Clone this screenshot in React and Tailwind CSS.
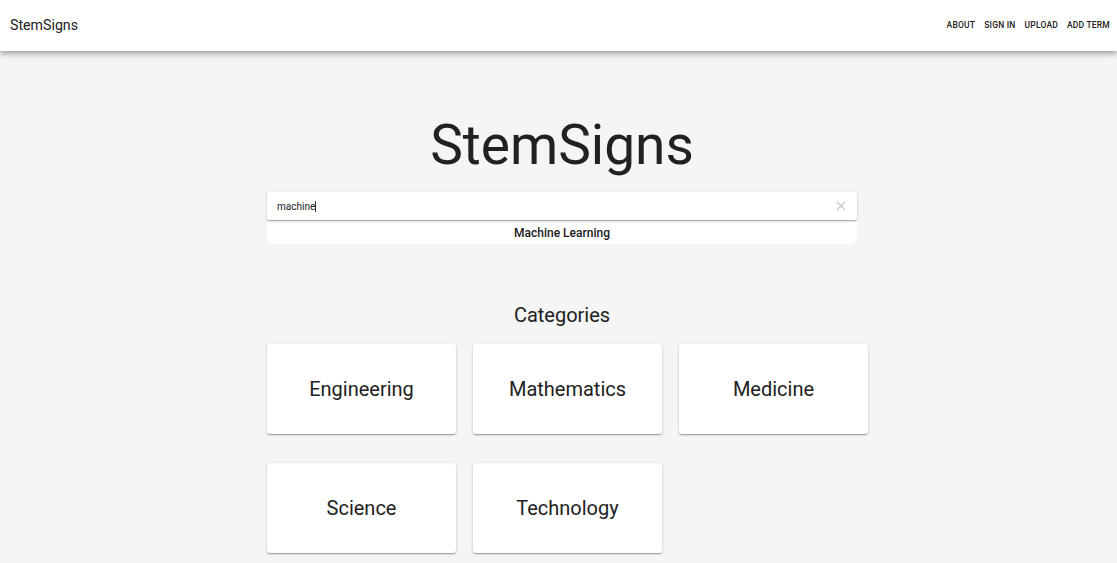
import React from "react";

const cats = ["Engineering", "Mathematics", "Medicine", "Science", "Technology"];

export default function App() {
  return (
    <div className="min-h-[563px] bg-[#f5f5f5] font-['Roboto',sans-serif] text-[#212121]">
      <header className="h-[51px] bg-white flex items-center justify-between pl-[10px] pr-[7px] shadow-[0_2px_4px_-1px_rgba(0,0,0,0.2),0_4px_5px_0_rgba(0,0,0,0.14),0_1px_10px_0_rgba(0,0,0,0.12)] relative z-10">
        <div className="text-[14.2px] text-[#212121]">StemSigns</div>
        <nav className="flex gap-[9px] text-[8.5px] font-medium tracking-[0.2px] text-[#212121]">
          <span>ABOUT</span>
          <span>SIGN IN</span>
          <span>UPLOAD</span>
          <span>ADD TERM</span>
        </nav>
      </header>
      <main className="flex flex-col items-center pl-[7px]">
        <h1 className="mt-[56px] text-[55px] leading-[76px] font-normal text-[#212121]">StemSigns</h1>
        <div className="mt-[9px] w-[590px]">
          <div className="h-[28px] bg-white rounded-[2px] flex items-center justify-between px-[10px] shadow-[0_1px_3px_rgba(0,0,0,0.2),0_1px_1px_rgba(0,0,0,0.14),0_2px_1px_-1px_rgba(0,0,0,0.12)] relative z-[1]">
            <span className="text-[10px] text-[#212121]">machine<span className="inline-block w-px h-[11px] bg-[#333] align-middle"></span></span>
            <svg width="10" height="10" viewBox="0 0 10 10" className="mr-[1px]"><path d="M1 1L9 9M9 1L1 9" stroke="#c4c4c4" strokeWidth="1.1" /></svg>
          </div>
          <div className="h-[24px] pt-[2px] bg-white rounded-b-[8px] flex items-center justify-center text-[12px] font-medium text-[#1a1a1a]">Machine Learning</div>
        </div>
        <h2 className="mt-[59px] text-[20px] leading-[24px] text-[#212121]">Categories</h2>
        <div className="mt-[17px] w-[590px]">
          <div className="grid grid-cols-[189px_189px_189px] gap-x-[17px] gap-y-[29px] w-[601px]">
            {cats.map((c) => (
              <div key={c} className="h-[90px] bg-white rounded-[3px] flex items-center justify-center text-[20px] text-[#212121] shadow-[0_1px_3px_rgba(0,0,0,0.2),0_1px_1px_rgba(0,0,0,0.14),0_2px_1px_-1px_rgba(0,0,0,0.12)]">
                {c}
              </div>
            ))}
          </div>
        </div>
      </main>
    </div>
  );
}
